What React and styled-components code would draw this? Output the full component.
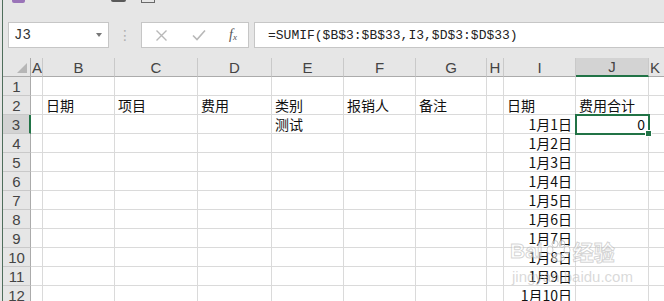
import React from "react";
import styled, { createGlobalStyle } from "styled-components";

const GlobalStyle = createGlobalStyle`
  html, body {
    margin: 0;
    padding: 0;
    background: #e6e6e6;
    overflow: hidden;
  }
`;

const cols = [
  { key: "A", w: 12 },
  { key: "B", w: 72 },
  { key: "C", w: 83 },
  { key: "D", w: 74 },
  { key: "E", w: 72 },
  { key: "F", w: 72 },
  { key: "G", w: 71 },
  { key: "H", w: 17 },
  { key: "I", w: 72 },
  { key: "J", w: 73 },
  { key: "K", w: 40 }
];

const cells = {
  "2": { B: "日期", C: "项目", D: "费用", E: "类别", F: "报销人", G: "备注", I: "日期", J: "费用合计" },
  "3": { E: "测试", J: "0" }
};

const rightAligned = ["J3"];

const rows = Array.from({ length: 12 }, (_, i) => i + 1);

export default function App() {
  const getValue = (r, c) => {
    if (c === "I" && r >= 3) return `1月${r - 2}日`;
    return (cells[r] && cells[r][c]) || "";
  };

  return (
    <Window>
      <GlobalStyle />
      <TopStrip>
        <StripIcon $w={13} $h={3} $color="#9a74b8" $ml={9} />
        <StripIcon $w={15} $h={2} $color="#5a5a5a" $ml={86} />
        <StripOutline $ml={15} />
      </TopStrip>

      <FormulaRow>
        <NameBox>
          J3
          <Caret />
        </NameBox>
        <Dots>⋮</Dots>
        <ButtonBox>
          <svg width="13" height="13" viewBox="0 0 13 13">
            <path d="M1.5 1.5 L11.5 11.5 M11.5 1.5 L1.5 11.5" stroke="#b8b8b8" strokeWidth="1.4" fill="none" />
          </svg>
          <svg width="14" height="12" viewBox="0 0 14 12">
            <path d="M1 6.5 L5 10.5 L13 1.5" stroke="#b8b8b8" strokeWidth="1.6" fill="none" />
          </svg>
          <Fx>
            f<sub>x</sub>
          </Fx>
        </ButtonBox>
        <FormulaInput>=SUMIF($B$3:$B$33,I3,$D$3:$D$33)</FormulaInput>
      </FormulaRow>

      <Sheet>
        <Grid>
          <Corner>
            <Triangle />
          </Corner>
          {cols.map(c => (
            <ColHead key={c.key} $active={c.key === "J"} $narrow={c.key === "A" || c.key === "K"}>
              {c.key}
            </ColHead>
          ))}
          {rows.map(r => (
            <React.Fragment key={r}>
              <RowHead $active={r === 3}>{r}</RowHead>
              {cols.map(c => {
                const v = getValue(r, c.key);
                const id = c.key + r;
                const right = rightAligned.includes(id) || (c.key === "I" && r >= 3);
                return (
                  <Cell key={id} $right={right} $selected={id === "J3"}>
                    {v}
                  </Cell>
                );
              })}
            </React.Fragment>
          ))}
        </Grid>
        <Watermark>
          <Brand>
            Bai
            <svg width="28" height="22" viewBox="0 0 26 22">
              <g fill="rgba(255,255,255,0.55)" stroke="rgba(160,160,160,0.5)" strokeWidth="1">
                <ellipse cx="5" cy="10" rx="3" ry="4" />
                <ellipse cx="10" cy="4" rx="3" ry="3.5" />
                <ellipse cx="17" cy="4" rx="3" ry="3.5" />
                <ellipse cx="22" cy="10" rx="3" ry="4" />
                <path d="M7 19 C8 12 18 12 20 19 C18 22 9 22 7 19 Z" />
              </g>
            </svg>
            经验
          </Brand>
          <Domain>jingyan.baidu.com</Domain>
        </Watermark>
      </Sheet>
    </Window>
  );
}

const Window = styled.div`
  width: 662px;
  height: 301px;
  margin-left: 2px;
  border-left: 1px solid #4f6e5c;
  box-sizing: border-box;
  display: flex;
  flex-direction: column;
  overflow: hidden;
  background: #e6e6e6;
`;

const TopStrip = styled.div`
  height: 22px;
  flex-shrink: 0;
  display: flex;
  align-items: flex-start;
`;

const StripIcon = styled.div`
  width: ${p => p.$w}px;
  height: ${p => p.$h}px;
  margin-left: ${p => p.$ml}px;
  background: ${p => p.$color};
  border-radius: 0 0 2px 2px;
`;

const StripOutline = styled.div`
  width: 12px;
  height: 2px;
  margin-left: ${p => p.$ml}px;
  border: 1px solid #6a6a6a;
  border-top: none;
`;

const FormulaRow = styled.div`
  height: 26px;
  flex-shrink: 0;
  display: flex;
  align-items: stretch;
  padding-left: 5px;
  margin-bottom: 10px;
`;

const NameBox = styled.div`
  width: 101px;
  box-sizing: border-box;
  background: #fff;
  border: 1px solid #c6c6c6;
  display: flex;
  align-items: center;
  padding-left: 5px;
  position: relative;
  font-family: "Liberation Mono", "DejaVu Sans Mono", monospace;
  font-size: 14px;
  color: #333;
`;

const Caret = styled.div`
  position: absolute;
  right: 6px;
  top: 10px;
  width: 0;
  height: 0;
  border-left: 3.5px solid transparent;
  border-right: 3.5px solid transparent;
  border-top: 4px solid #777;
`;

const Dots = styled.div`
  width: 32px;
  display: flex;
  align-items: center;
  justify-content: center;
  color: #b0b0b0;
  font-family: "DejaVu Sans", sans-serif;
  font-size: 14px;
`;

const ButtonBox = styled.div`
  width: 108px;
  box-sizing: border-box;
  background: #fff;
  border: 1px solid #c6c6c6;
  display: flex;
  align-items: center;
  padding-left: 13px;
  gap: 24px;
`;

const Fx = styled.span`
  font-family: "Liberation Serif", serif;
  font-style: italic;
  font-size: 14px;
  color: #555;
  margin-left: -1px;

  sub {
    font-size: 9px;
    vertical-align: -1px;
  }
`;

const FormulaInput = styled.div`
  flex: 1;
  margin-left: 5px;
  background: #fff;
  border: 1px solid #c6c6c6;
  border-right: none;
  display: flex;
  align-items: center;
  padding-left: 13px;
  font-family: "Liberation Mono", "DejaVu Sans Mono", monospace;
  font-size: 13px;
  color: #222;
  white-space: nowrap;
`;

const Sheet = styled.div`
  flex: 1;
  min-height: 0;
  overflow: hidden;
  position: relative;
  background: #fff;
`;

const Grid = styled.div`
  display: grid;
  grid-template-columns: 28px ${cols.map(c => c.w + "px").join(" ")};
  grid-auto-rows: 19px;
`;

const Corner = styled.div`
  background: #e6e6e6;
  border-right: 1px solid #ababab;
  border-bottom: 1px solid #ababab;
  position: relative;
  box-sizing: border-box;
`;

const Triangle = styled.div`
  position: absolute;
  right: 3px;
  bottom: 3px;
  width: 0;
  height: 0;
  border-left: 10px solid transparent;
  border-bottom: 10px solid #b6b6b6;
`;

const ColHead = styled.div`
  box-sizing: border-box;
  background: ${p => (p.$active ? "#d3d3d3" : "#e6e6e6")};
  border-right: 1px solid #c9c9c9;
  border-bottom: ${p => (p.$active ? "2px solid #217346" : "1px solid #ababab")};
  display: flex;
  align-items: center;
  justify-content: ${p => (p.$narrow ? "flex-start" : "center")};
  padding-left: ${p => (p.$narrow ? "1px" : "0")};
  font-family: "Liberation Sans", "Noto Sans", sans-serif;
  font-size: 15px;
  color: #444;
  overflow: hidden;
`;

const RowHead = styled.div`
  box-sizing: border-box;
  background: ${p => (p.$active ? "#d3d3d3" : "#e6e6e6")};
  border-right: ${p => (p.$active ? "2px solid #217346" : "1px solid #ababab")};
  border-bottom: 1px solid #c9c9c9;
  display: flex;
  align-items: center;
  justify-content: center;
  font-family: "Liberation Sans", "Noto Sans", sans-serif;
  font-size: 15px;
  color: #444;
`;

const Cell = styled.div`
  box-sizing: border-box;
  border-right: 1px solid #dadada;
  border-bottom: 1px solid #dadada;
  display: flex;
  align-items: flex-end;
  justify-content: ${p => (p.$right ? "flex-end" : "flex-start")};
  padding: 0 3px 0 3px;
  font-family: "Noto Sans CJK SC", "Noto Sans", sans-serif;
  font-size: 14px;
  line-height: 18px;
  color: #111;
  white-space: nowrap;
  position: relative;
  ${p =>
    p.$selected &&
    `
    outline: 2px solid #217346;
    outline-offset: -1px;
    z-index: 1;
    &::after {
      content: "";
      position: absolute;
      right: -4px;
      bottom: -4px;
      width: 5px;
      height: 5px;
      background: #217346;
      border: 1px solid #fff;
    }
  `}
`;

const Watermark = styled.div`
  position: absolute;
  left: 507px;
  top: 182px;
  display: flex;
  flex-direction: column;
  align-items: flex-start;
  pointer-events: none;
  z-index: 2;
`;

const Brand = styled.div`
  display: flex;
  align-items: center;
  gap: 1px;
  height: 22px;
  font-family: "Liberation Sans", "Noto Sans CJK SC", sans-serif;
  font-size: 21px;
  font-weight: bold;
  color: rgba(255, 255, 255, 0.5);
  -webkit-text-stroke: 1px rgba(160, 160, 160, 0.45);
`;

const Domain = styled.div`
  margin-top: 8px;
  margin-left: 2px;
  font-family: "Liberation Sans", sans-serif;
  font-size: 15px;
  line-height: 13px;
  color: rgba(180, 180, 180, 0.5);
`;
